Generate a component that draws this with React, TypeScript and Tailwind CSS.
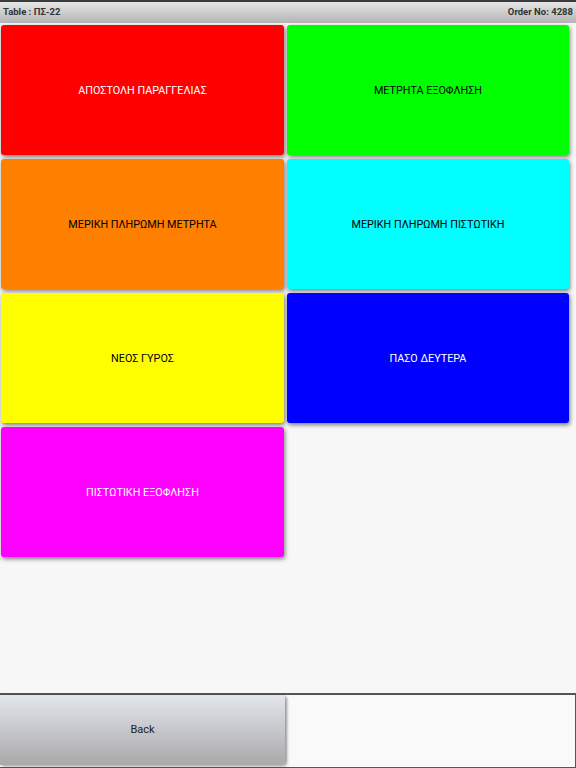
const tiles = [
  { label: "ΑΠΟΣΤΟΛΗ ΠΑΡΑΓΓΕΛΙΑΣ", cls: "bg-[#ff0000] text-white" },
  { label: "ΜΕΤΡΗΤΑ ΕΞΟΦΛΗΣΗ", cls: "bg-[#00ff00] text-black" },
  { label: "ΜΕΡΙΚΗ ΠΛΗΡΩΜΗ ΜΕΤΡΗΤΑ", cls: "bg-[#ff8000] text-black" },
  { label: "ΜΕΡΙΚΗ ΠΛΗΡΩΜΗ ΠΙΣΤΩΤΙΚΗ", cls: "bg-[#00ffff] text-black" },
  { label: "ΝΕΟΣ ΓΥΡΟΣ", cls: "bg-[#ffff00] text-black" },
  { label: "ΠΑΣΟ ΔΕΥΤΕΡΑ", cls: "bg-[#0000ff] text-white" },
  { label: "ΠΙΣΤΩΤΙΚΗ ΕΞΟΦΛΗΣΗ", cls: "bg-[#ff00ff] text-white" },
];

export default function App() {
  return (
    <div
      className="flex h-[768px] w-[576px] flex-col overflow-hidden bg-[#f7f7f7]"
      style={{ fontFamily: "Roboto, 'Noto Sans', sans-serif" }}
    >
      {/* Header */}
      <div className="flex h-[23px] shrink-0 items-center justify-between border-t-2 border-[#3a3a3a] bg-gradient-to-b from-[#e6e6e6] to-[#b4b4b4] px-[3px] text-[9.5px] font-bold text-[#333]">
        <span>Table : ΠΣ-22</span>
        <span>Order No: 4288</span>
      </div>

      {/* Actions */}
      <div className="grid grid-cols-[283px_282px] gap-x-[3px] gap-y-[4px] pl-[1px] pt-[2px]">
        {tiles.map((t) => (
          <button
            key={t.label}
            type="button"
            className={`flex h-[130px] items-center justify-center rounded-[3px] pt-[2px] text-[10.8px] shadow-[1px_2px_4px_rgba(0,0,0,0.5)] ${t.cls}`}
          >
            {t.label}
          </button>
        ))}
      </div>

      <div className="flex-1" />

      {/* Footer */}
      <div className="flex h-[75px] shrink-0 border-t-2 border-r border-b border-[#555] bg-[#f9f9f9]">
        <button
          type="button"
          className="mb-[2px] w-[285px] rounded-r-[4px] bg-gradient-to-b from-[#e4e6ee] to-[#a9a9a9] text-[11px] text-[#222] shadow-[2px_1px_3px_rgba(0,0,0,0.4)]"
        >
          Back
        </button>
      </div>
    </div>
  );
}
